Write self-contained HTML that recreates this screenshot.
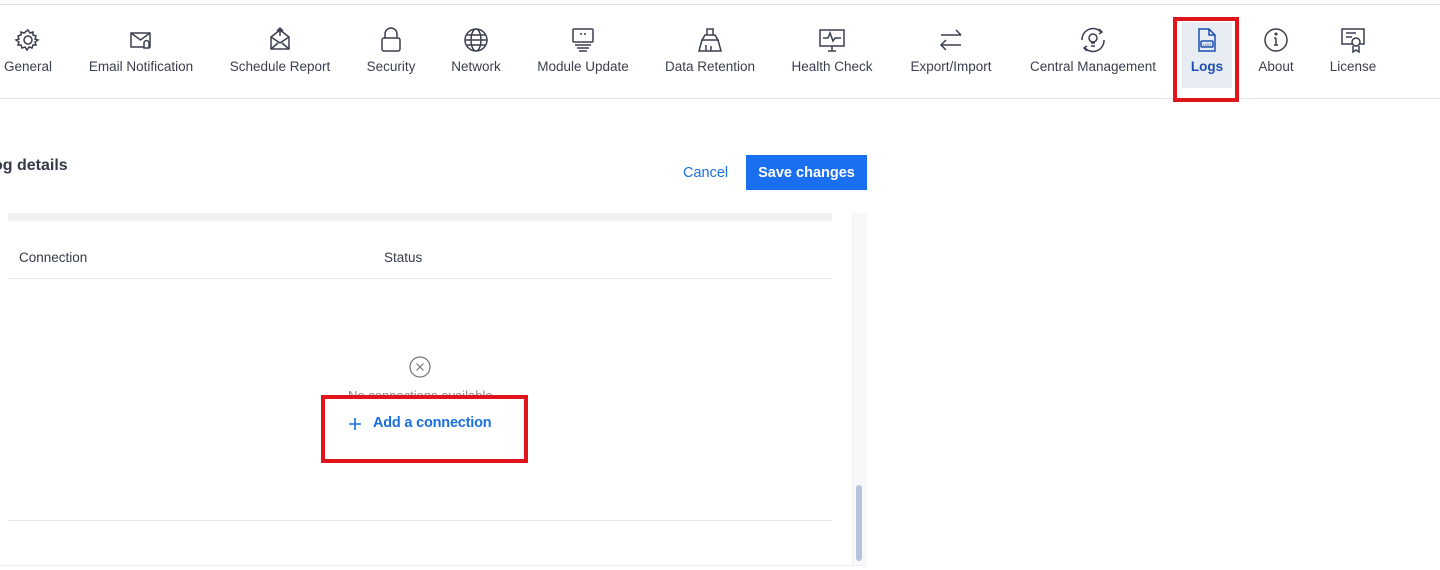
<!DOCTYPE html>
<html><head><style>
body{margin:0;width:1440px;height:570px;background:#fff;font-family:"Liberation Sans",sans-serif;position:relative;overflow:hidden;color:#3a3f4f}
.a{position:absolute}
.nav{left:0;top:4px;width:1440px;height:95px;border-top:1px solid #dfe3ea;border-bottom:1px solid #dfe3ea;box-sizing:border-box}
.it{position:absolute;top:0;transform:translateX(-50%);text-align:center;white-space:nowrap;font-size:13.5px;color:#3a3f4f}
.it span{position:absolute;top:55px;left:50%;transform:translateX(-50%)}
</style></head><body>
<div class="a nav"></div>
<div class="a" style="left:1182px;top:22px;width:50px;height:66px;background:#e8ecf3"></div>
<div class="a" style="left:1182px;top:98px;width:50px;height:3px;background:#1c4fb0"></div>
<svg class="a" style="left:0;top:0" width="1440" height="110" fill="none" stroke="#3a3f4f" stroke-width="1.5">
<g transform="translate(28,40)"><circle r="4"/><path d="M0-10l2 3 3-1 0 3 3 1-1 3 3 1-3 2 1 3-3 0-1 3-3-1-2 3-2-3-3 1-1-3-3 0 1-3-3-2 3-1-1-3 3-1 0-3 3 1z"/></g>
<g transform="translate(141,40)"><rect x="-10" y="-7" width="19" height="14"/><path d="M-10-7l9.5 7 9.5-7"/><path d="M3 8v-5a2.5 2.5 0 0 1 5 0v5h-5z" fill="#fff"/></g>
<g transform="translate(280,40)"><path d="M-9-3v12h18v-12l-9-7z M-9 9l7-6 M9 9l-7-6 M-9-3l9 6 9-6"/><path d="M0-12v8M-3-9l3-3 3 3"/></g>
<g transform="translate(391,40)"><rect x="-9" y="-2" width="18" height="13" rx="2"/><path d="M-6-2v-4a6 6 0 0 1 12 0v4"/></g>
<g transform="translate(476,40)"><circle r="11"/><ellipse rx="5" ry="11"/><path d="M-11 0h22M-9-5h18M-9 5h18"/></g>
<g transform="translate(583,40)"><rect x="-10" y="-11" width="20" height="13" rx="1"/><path d="M-3-6h2M1-6h2M-8 5h16M-6 8h12M-4 11h8"/></g>
<g transform="translate(710,40)"><path d="M-3-11h6v6h-6z M-8 0l3-5h10l3 5z M-11 11l3-11h16l3 11z M-4 5v6M1 6v5"/></g>
<g transform="translate(832,40)"><rect x="-12" y="-10" width="24" height="16"/><path d="M-9-2h5l2-5 3 8 2-3h6M-4 11h8M0 6v5"/></g>
<g transform="translate(951,40)"><path d="M-10-5h20M5-10l5 5M10 5h-20M-5 0l-5 5 5 5"/></g>
<g transform="translate(1093,40)"><path d="M-11 0a11 11 0 0 1 19-8M11 0a11 11 0 0 1-19 8M6-11l3 3-3 2M-6 11l-3-3 3-2"/><circle cy="-2" r="4"/><path d="M-2 3h4M-2 6h4"/></g>
<g transform="translate(1207,40)" stroke="#1c4fb0"><path d="M-8 -11h10l6 6v16h-16z M2-11v6h6"/><rect x="-6" y="1" width="12" height="6" rx="1"/><text x="0" y="6" font-size="4" stroke="none" fill="#1c4fb0" text-anchor="middle">LOG</text></g>
<g transform="translate(1276,40)"><circle r="11"/><path d="M0-2v7M-2 5h4M-2-2h2"/><circle cy="-6" r=".8" fill="#3a3f4f"/></g>
<g transform="translate(1353,40)"><rect x="-11" y="-11" width="22" height="15"/><path d="M-7-7h10M-7-3h6"/><circle cx="3" cy="2" r="4" fill="#fff"/><path d="M0 6v6l3-2 3 2v-6"/></g>
</svg>
<div class="a it" style="left:28px;top:4px"><span>General</span></div>
<div class="a it" style="left:141px;top:4px"><span>Email Notification</span></div>
<div class="a it" style="left:280px;top:4px"><span>Schedule Report</span></div>
<div class="a it" style="left:391px;top:4px"><span>Security</span></div>
<div class="a it" style="left:476px;top:4px"><span>Network</span></div>
<div class="a it" style="left:583px;top:4px"><span>Module Update</span></div>
<div class="a it" style="left:710px;top:4px"><span>Data Retention</span></div>
<div class="a it" style="left:832px;top:4px"><span>Health Check</span></div>
<div class="a it" style="left:951px;top:4px"><span>Export/Import</span></div>
<div class="a it" style="left:1093px;top:4px"><span>Central Management</span></div>
<div class="a it" style="left:1207px;top:4px;color:#1c4fb0;font-weight:bold"><span>Logs</span></div>
<div class="a it" style="left:1276px;top:4px"><span>About</span></div>
<div class="a it" style="left:1353px;top:4px"><span>License</span></div>
<div class="a" style="left:1173px;top:17px;width:58px;height:77px;border:4px solid #e0141b"></div>

<div class="a" style="left:-7px;top:157px;font-size:16px;font-weight:bold;color:#333a48">og details</div>
<div class="a" style="left:683px;top:165px;font-size:14.5px;color:#1a6fe0">Cancel</div>
<div class="a" style="left:746px;top:155px;width:121px;height:35px;background:#1a6ff0;color:#fff;font-size:14.5px;font-weight:bold;text-align:center;line-height:36px">Save changes</div>

<div class="a" style="left:8px;top:213px;width:824px;height:8px;background:#f1f1f1"></div>
<div class="a" style="left:852px;top:213px;width:14px;height:352px;background:#f7f8fa;border-left:1px solid #eceef2"></div>
<div class="a" style="left:856px;top:485px;width:6px;height:76px;background:#b8c3da;border-radius:3px"></div>
<div class="a" style="left:19px;top:250px;font-size:13.5px;color:#333a48">Connection</div>
<div class="a" style="left:384px;top:250px;font-size:13.5px;color:#333a48">Status</div>
<div class="a" style="left:8px;top:278px;width:824px;height:1px;background:#e6e8ec"></div>
<div class="a" style="left:8px;top:520px;width:824px;height:1px;background:#e6e8ec"></div>
<div class="a" style="left:0;top:565px;width:866px;height:1px;background:#eceef2"></div>
<svg class="a" style="left:408px;top:355px" width="24" height="24" fill="none" stroke="#777" stroke-width="1.2"><circle cx="12" cy="12" r="10"/><path d="M8.5 8.5l7 7M15.5 8.5l-7 7"/></svg>
<div class="a" style="left:348px;top:388px;font-size:13px;color:#888;height:8px;overflow:hidden">No connections available</div>
<svg class="a" style="left:348px;top:417px" width="14" height="14" stroke="#1a6fe0" stroke-width="1.6"><path d="M7 1v12M1 7h12"/></svg>
<div class="a" style="left:373px;top:415px;font-size:14.5px;color:#1a6fe0;font-weight:bold;letter-spacing:-0.2px">Add a connection</div>
<div class="a" style="left:321px;top:395px;width:199px;height:60px;border:4px solid #e0141b"></div>
</body></html>
